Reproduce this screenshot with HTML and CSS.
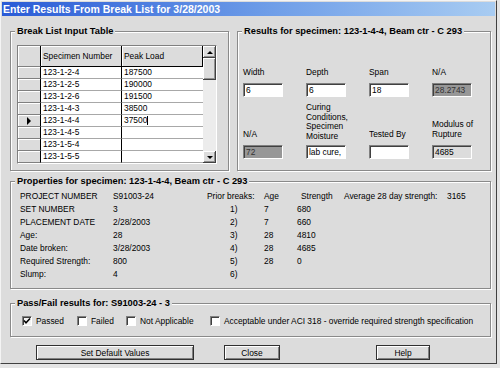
FILE: index.html
```html
<!DOCTYPE html>
<html lang="en">
<head>
    <meta charset="UTF-8">
    <title>Enter Results From Break List</title>
    <link rel="stylesheet" href="styles.css">
</head>
<body>
    <div class="window">
        <div class="titlebar">Enter Results From Break List for 3/28/2003</div>

        <div class="dialog">
            <div class="top-row">
                <!-- break list grid -->
                <section class="group group-list">
                    <div class="group-title">Break List Input Table</div>
                    <div class="grid-frame">
                        <table class="grid">
                            <colgroup>
                                <col class="col-sel">
                                <col class="col-spec">
                                <col class="col-load">
                            </colgroup>
                            <thead>
                                <tr>
                                    <th class="sel"></th>
                                    <th>Specimen Number</th>
                                    <th>Peak Load</th>
                                </tr>
                            </thead>
                            <tbody>
                                <tr><td class="sel"></td><td>123-1-2-4</td><td>187500</td></tr>
                                <tr><td class="sel"></td><td>123-1-2-5</td><td>190000</td></tr>
                                <tr><td class="sel"></td><td>123-1-2-6</td><td>191500</td></tr>
                                <tr><td class="sel"></td><td>123-1-4-3</td><td>38500</td></tr>
                                <tr><td class="sel"><span class="marker"></span></td><td>123-1-4-4</td><td>37500<span class="caret"></span></td></tr>
                                <tr><td class="sel"></td><td>123-1-4-5</td><td></td></tr>
                                <tr><td class="sel"></td><td>123-1-5-4</td><td></td></tr>
                                <tr><td class="sel"></td><td>123-1-5-5</td><td></td></tr>
                            </tbody>
                        </table>
                        <div class="scrollbar">
                            <div class="scroll-btn"><span class="arrow-up"></span></div>
                            <div class="scroll-thumb"></div>
                            <div class="scroll-track"></div>
                            <div class="scroll-btn"><span class="arrow-down"></span></div>
                        </div>
                    </div>
                </section>

                <!-- results for the selected specimen -->
                <section class="group group-results">
                    <div class="group-title">Results for specimen: 123-1-4-4, Beam ctr - C 293</div>
                    <div class="fields">
                        <div class="field">
                            <div class="field-label">Width</div>
                            <div class="edit">6</div>
                        </div>
                        <div class="field">
                            <div class="field-label">Depth</div>
                            <div class="edit">6</div>
                        </div>
                        <div class="field">
                            <div class="field-label">Span</div>
                            <div class="edit">18</div>
                        </div>
                        <div class="field">
                            <div class="field-label">N/A</div>
                            <div class="edit edit-disabled">28.2743</div>
                        </div>

                        <div class="field">
                            <div class="field-label field-label-tall">N/A</div>
                            <div class="edit edit-disabled">72</div>
                        </div>
                        <div class="field">
                            <div class="field-label field-label-tall field-label-top">Curing Conditions, Specimen Moisture</div>
                            <div class="edit">lab cure,</div>
                        </div>
                        <div class="field">
                            <div class="field-label field-label-tall">Tested By</div>
                            <div class="edit"></div>
                        </div>
                        <div class="field">
                            <div class="field-label field-label-tall">Modulus of Rupture</div>
                            <div class="edit edit-readonly">4685</div>
                        </div>
                    </div>
                </section>
            </div>

            <!-- specimen properties -->
            <section class="group group-props">
                <div class="group-title">Properties for specimen: 123-1-4-4, Beam ctr - C 293</div>
                <div class="props">
                    <div class="prop-label">PROJECT NUMBER</div>
                    <div>S91003-24</div>
                    <div>Prior breaks:</div>
                    <div>Age</div>
                    <div class="strength-head">Strength</div>
                    <div>Average 28 day strength:</div>
                    <div>3165</div>

                    <div class="prop-label">SET NUMBER</div>
                    <div>3</div>
                    <div class="break-no">1)</div>
                    <div>7</div>
                    <div>680</div>

                    <div class="prop-label">PLACEMENT DATE</div>
                    <div>2/28/2003</div>
                    <div class="break-no">2)</div>
                    <div>7</div>
                    <div>660</div>

                    <div class="prop-label">Age:</div>
                    <div>28</div>
                    <div class="break-no">3)</div>
                    <div>28</div>
                    <div>4810</div>

                    <div class="prop-label">Date broken:</div>
                    <div>3/28/2003</div>
                    <div class="break-no">4)</div>
                    <div>28</div>
                    <div>4685</div>

                    <div class="prop-label">Required Strength:</div>
                    <div>800</div>
                    <div class="break-no">5)</div>
                    <div>28</div>
                    <div>0</div>

                    <div class="prop-label">Slump:</div>
                    <div>4</div>
                    <div class="break-no">6)</div>
                </div>
            </section>

            <!-- pass / fail -->
            <section class="group group-pass">
                <div class="group-title">Pass/Fail results for: S91003-24 - 3</div>
                <div class="checks">
                    <label class="check check-passed">
                        <span class="box">
                            <svg width="8" height="8" viewBox="0 0 8 8"><path d="M1 3.5 L3 5.8 L7 1.5" fill="none" stroke="#000" stroke-width="1.5"/></svg>
                        </span>
                        Passed
                    </label>
                    <label class="check"><span class="box"></span>Failed</label>
                    <label class="check"><span class="box"></span>Not Applicable</label>
                    <label class="check"><span class="box"></span>Acceptable under ACI 318 - override required strength specification</label>
                </div>
            </section>

            <div class="buttons">
                <button class="btn btn-defaults">Set Default Values</button>
                <button class="btn btn-close">Close</button>
                <button class="btn btn-help">Help</button>
            </div>
        </div>
    </div>
</body>
</html>
```

FILE: styles.css
```css
* {
    margin: 0;
    padding: 0;
    box-sizing: border-box;
}

body {
    background: #e4e4e4;
    font-family: 'Liberation Sans', Arial, sans-serif;
    font-size: 8.4px;
    color: #000;
}

.window {
    width: 497px;
    height: 364px;
    background: #dcdcdc;
    border: 1px solid;
    border-color: #f4f4f4 #404040 #404040 #f4f4f4;
    padding: 1px;
}

.titlebar {
    height: 14px;
    background: linear-gradient(to right, #2a5bd6, #6f9ee8 55%, #a8ccf2);
    color: #fff;
    font-weight: bold;
    font-size: 10.5px;
    line-height: 14px;
    padding-left: 1px;
}

.dialog {
    padding: 15px 0 0 8px;
}

.top-row {
    display: flex;
    gap: 8px;
}

/* etched group box */
.group {
    border: 1px solid #8a8a8a;
    box-shadow: inset 1px 1px 0 #fff, 1px 1px 0 #fff;
}

.group-title {
    width: max-content;
    height: 10px;
    margin: -6px 0 0 4px;
    padding: 0 2px;
    background: #dcdcdc;
    font-weight: bold;
    font-size: 9.3px;
    line-height: 10px;
}

.group-list {
    width: 219px;
    height: 140px;
}

.group-results {
    width: 254px;
    height: 140px;
}

.group-props {
    width: 481px;
    height: 108px;
    margin-top: 10px;
}

.group-pass {
    width: 481px;
    height: 34px;
    margin-top: 14px;
}

/* grid */
.grid-frame {
    display: flex;
    width: 200px;
    height: 119px;
    margin: 9px 0 0 6px;
    border: 1px solid;
    border-color: #808080 #fff #fff #808080;
    background: #fff;
}

.grid {
    width: 185px;
    border-collapse: separate;
    border-spacing: 0;
    table-layout: fixed;
    align-self: flex-start;
}

.col-sel { width: 23px; }
.col-spec { width: 81px; }
.col-load { width: 81px; }

.grid th {
    height: 21px;
    padding: 0 0 0 2px;
    background: #dcdcdc;
    font-weight: normal;
    text-align: left;
    border-right: 1px solid #000;
    border-bottom: 1px solid #000;
    box-shadow: inset 1px 1px 0 #fff;
}

.grid td {
    height: 12px;
    padding: 0 0 0 2px;
    line-height: 11px;
    border-bottom: 1px solid #a8a8a8;
    white-space: nowrap;
}

.grid td:nth-child(2) {
    border-right: 1px solid #000;
}

.grid .sel {
    padding: 0;
    background: #dcdcdc;
    border-right: 1px solid #000;
    border-bottom: 1px solid #808080;
    box-shadow: inset 1px 1px 0 #fff;
    text-align: center;
}

.marker {
    display: inline-block;
    width: 0;
    height: 0;
    border-left: 4px solid #000;
    border-top: 4px solid transparent;
    border-bottom: 4px solid transparent;
    vertical-align: middle;
}

.caret {
    display: inline-block;
    width: 1px;
    height: 9px;
    background: #000;
    vertical-align: middle;
}

.scrollbar {
    width: 13px;
    display: flex;
    flex-direction: column;
    background: #ececec;
}

.scroll-btn,
.scroll-thumb {
    background: #dcdcdc;
    box-shadow: inset -1px -1px 0 #404040, inset 1px 1px 0 #fff, inset -2px -2px 0 #909090;
}

.scroll-btn {
    height: 12px;
    display: flex;
    align-items: center;
    justify-content: center;
}

.scroll-thumb {
    height: 22px;
}

.scroll-track {
    flex: 1;
}

.arrow-up,
.arrow-down {
    width: 0;
    height: 0;
    border-left: 3px solid transparent;
    border-right: 3px solid transparent;
}

.arrow-up {
    border-bottom: 3px solid #000;
}

.arrow-down {
    border-top: 3px solid #000;
}

/* results fields */
.fields {
    display: grid;
    grid-template-columns: repeat(4, 63px);
    padding-left: 5px;
}

.field-label {
    height: 41px;
    display: flex;
    align-items: flex-end;
    line-height: 10px;
}

.field-label-tall {
    margin-top: 3px;
    padding-bottom: 2px;
    overflow: hidden;
}

.field-label-top {
    align-items: flex-start;
    padding: 3px 0 0;
    line-height: 9.5px;
}

.edit {
    width: 40px;
    height: 14px;
    margin-top: 6px;
    padding-left: 2px;
    line-height: 12px;
    background: #fff;
    border: 1px solid;
    border-color: #808080 #fff #fff #808080;
    box-shadow: inset 1px 1px 0 #404040;
    white-space: nowrap;
    overflow: hidden;
}

.field-label-tall + .edit {
    margin-top: 4px;
}

.edit-disabled {
    background: #979797;
    color: #333;
}

.edit-readonly {
    background: #dcdcdc;
}

/* properties */
.props {
    display: grid;
    grid-template-columns: 93px 94px 57px 33px 47px 103px auto;
    grid-auto-rows: 13px;
    margin-top: 4px;
    padding-left: 9px;
    line-height: 13px;
}

.prop-label {
    grid-column: 1;
}

.break-no {
    padding-left: 23px;
}

.strength-head {
    padding-left: 4px;
}

/* pass / fail */
.checks {
    display: grid;
    grid-template-columns: 55px 49px 84px auto;
    margin-top: 8px;
    padding-left: 11px;
}

.check {
    display: flex;
    align-items: center;
    gap: 4px;
    height: 10px;
    line-height: 10px;
    white-space: nowrap;
}

.box {
    width: 10px;
    height: 10px;
    flex: none;
    display: flex;
    align-items: center;
    justify-content: center;
    background: #fff;
    border: 1px solid;
    border-color: #808080 #fff #fff #808080;
    box-shadow: inset 1px 1px 0 #404040;
}

.check-passed .box {
    background: #f4f4f4;
}

/* buttons */
.buttons {
    display: flex;
    margin-top: 8px;
    padding-left: 26px;
}

.btn {
    height: 15px;
    font-family: inherit;
    font-size: 8.4px;
    color: #000;
    background: #dcdcdc;
    border: 1px solid #303030;
    box-shadow: inset 1px 1px 0 #fff, inset -1px -1px 0 #808080;
}

.btn-defaults {
    width: 158px;
}

.btn-close {
    width: 56px;
    margin-left: 30px;
}

.btn-help {
    width: 54px;
    margin-left: 96px;
}
```
